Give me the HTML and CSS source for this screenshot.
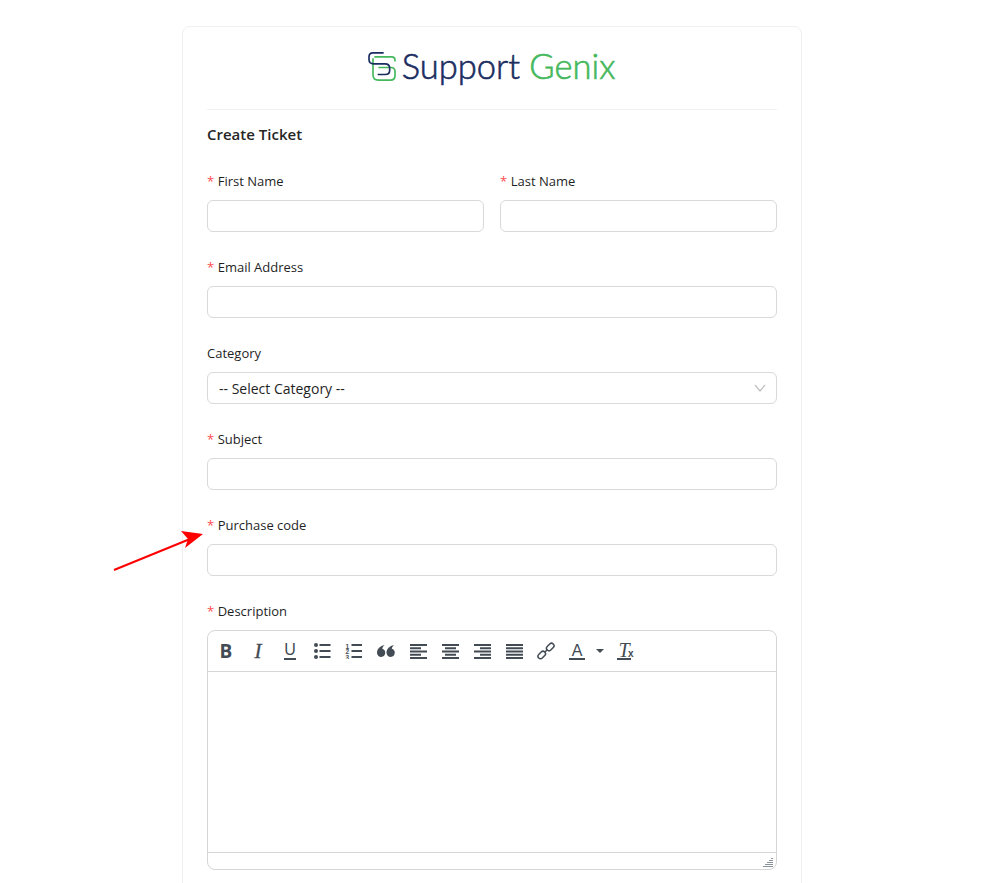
FILE: index.html
```html
<!DOCTYPE html>
<html lang="en">
<head>
    <meta charset="UTF-8">
    <meta name="viewport" content="width=device-width, initial-scale=1.0">
    <title>Create Ticket - Support Genix</title>
    <link rel="stylesheet" href="styles.css">
</head>
<body>

    <div class="card">
        <div class="logo">
            <svg class="logo-mark" viewBox="50 60 90 95" width="30" height="32">
                <path class="mark-green" d="M72 80H124Q134 80 134 90V94M68 84V134Q68 150 84 150H120Q134 150 134 136V124Q134 112 122 112H84"/>
                <path class="mark-navy" d="M100 68H68Q56 68 56 80V88Q56 101 70 101H104Q118 101 118 114V120Q118 133 104 133H82"/>
            </svg>
            <span class="logo-text">Support <span class="logo-green">Genix</span></span>
        </div>

        <h2 class="card-title">Create Ticket</h2>

        <div class="row">
            <div class="field">
                <label class="label"><span class="req">*</span>First Name</label>
                <input class="input" type="text">
            </div>
            <div class="field">
                <label class="label"><span class="req">*</span>Last Name</label>
                <input class="input" type="text">
            </div>
        </div>

        <div class="field">
            <label class="label"><span class="req">*</span>Email Address</label>
            <input class="input" type="text">
        </div>

        <div class="field">
            <label class="label">Category</label>
            <div class="select">
                <span>-- Select Category --</span>
                <svg class="chevron" viewBox="0 0 12 8" width="12" height="8"><path d="M1 1L6 7L11 1"/></svg>
            </div>
        </div>

        <div class="field">
            <label class="label"><span class="req">*</span>Subject</label>
            <input class="input" type="text">
        </div>

        <div class="field">
            <label class="label"><span class="req">*</span>Purchase code</label>
            <input class="input" type="text">
        </div>

        <div class="field">
            <label class="label"><span class="req">*</span>Description</label>
            <div class="editor">
                <div class="toolbar">
                    <button class="tool glyph-b">B</button>
                    <button class="tool glyph-i">I</button>
                    <button class="tool"><span class="glyph-u">U</span></button>
                    <button class="tool">
                        <svg viewBox="0 0 18 16" width="18" height="16">
                            <circle cx="3" cy="2" r="2"/><circle cx="3" cy="8" r="2"/><circle cx="3" cy="14" r="2"/>
                            <rect x="6.500" y="1" width="11" height="2"/><rect x="6.500" y="7" width="11" height="2"/><rect x="6.500" y="13" width="11" height="2"/>
                        </svg>
                    </button>
                    <button class="tool">
                        <svg viewBox="0 0 18 16" width="18" height="16">
                            <text class="mini" x="0.500" y="5.500">1</text><text class="mini" x="0.500" y="11">2</text><text class="mini" x="0.500" y="16.500">3</text>
                            <rect x="6.500" y="1" width="10.500" height="2"/><rect x="6.500" y="7" width="10.500" height="2"/><rect x="6.500" y="13" width="10.500" height="2"/>
                        </svg>
                    </button>
                    <button class="tool">
                        <svg viewBox="0 0 18 12" width="18" height="12">
                            <path d="M4.200 12A4.200 4.200 0 0 1 0 7.800C0 4 3 1 7.500 0C6 1.500 5.500 2.500 5.300 3.800A4.200 4.200 0 0 1 4.200 12Z"/>
                            <path d="M13.700 12A4.200 4.200 0 0 1 9.500 7.800C9.500 4 12.500 1 17 0C15.500 1.500 15 2.500 14.800 3.800A4.200 4.200 0 0 1 13.700 12Z"/>
                        </svg>
                    </button>
                    <button class="tool">
                        <svg viewBox="0 0 17 15" width="17" height="15">
                            <rect width="17" height="2"/><rect y="3.250" width="11" height="2"/><rect y="6.500" width="17" height="2"/><rect y="9.750" width="11" height="2"/><rect y="13" width="17" height="2"/>
                        </svg>
                    </button>
                    <button class="tool">
                        <svg viewBox="0 0 17 15" width="17" height="15">
                            <rect width="17" height="2"/><rect x="3" y="3.250" width="11" height="2"/><rect y="6.500" width="17" height="2"/><rect x="3" y="9.750" width="11" height="2"/><rect y="13" width="17" height="2"/>
                        </svg>
                    </button>
                    <button class="tool">
                        <svg viewBox="0 0 17 15" width="17" height="15">
                            <rect width="17" height="2"/><rect x="6" y="3.250" width="11" height="2"/><rect y="6.500" width="17" height="2"/><rect x="6" y="9.750" width="11" height="2"/><rect y="13" width="17" height="2"/>
                        </svg>
                    </button>
                    <button class="tool">
                        <svg viewBox="0 0 17 15" width="17" height="15">
                            <rect width="17" height="2"/><rect y="3.250" width="17" height="2"/><rect y="6.500" width="17" height="2"/><rect y="9.750" width="17" height="2"/><rect y="13" width="17" height="2"/>
                        </svg>
                    </button>
                    <button class="tool">
                        <svg class="line-icon" viewBox="0 0 18 18" width="18" height="18">
                            <path d="M7.500 10.500L10.500 7.500"/>
                            <rect x="9" y="2.500" width="8.500" height="5" rx="2.500" transform="rotate(-45 13.250 5)"/>
                            <rect x="0.500" y="10.500" width="8.500" height="5" rx="2.500" transform="rotate(-45 4.750 13)"/>
                        </svg>
                    </button>
                    <button class="tool tool-color"><span class="glyph-a">A</span></button>
                    <span class="caret"></span>
                    <button class="tool tool-clear"><span class="glyph-t">T</span><span class="glyph-x">x</span></button>
                </div>
                <div class="editor-body"></div>
                <div class="statusbar">
                    <svg viewBox="0 0 10 9" width="10" height="9">
                        <rect x="8" y="0" width="2" height="1"/>
                        <rect x="6" y="2" width="4" height="1"/>
                        <rect x="4" y="4" width="6" height="1"/>
                        <rect x="2" y="6" width="8" height="1"/>
                        <rect x="0" y="8" width="10" height="1"/>
                    </svg>
                </div>
            </div>
        </div>
    </div>

    <!-- flecha vermelha por cima do formulario -->
    <svg class="arrow" viewBox="0 0 100 50" width="100" height="50">
        <path class="arrow-line" d="M4 46L80 15"/>
        <path class="arrow-head" d="M93 10L71 7L78 15L75 24Z"/>
    </svg>

</body>
</html>
```
FILE: styles.css
```css
html, body {
    margin: 0;
    height: 883px;
    overflow: hidden;
    background: #fff;
}
body {
    position: relative;
    font-family: "Open Sans", "Noto Sans", sans-serif;
    font-size: 14px;
    color: #1f1f1f;
    padding: 26px 12px 0 0;
    box-sizing: border-box;
    display: flex;
    justify-content: center;
}
.card {
    width: 620px;
    height: 960px;
    flex: none;
    box-sizing: border-box;
    padding: 0 24px;
    background: #fff;
    border: 1px solid #f0f0f0;
    border-radius: 8px;
}
.logo {
    height: 83px;
    display: flex;
    align-items: flex-start;
    justify-content: center;
    gap: 5px;
    padding: 19px 2px 0 0;
    box-sizing: border-box;
    border-bottom: 1px solid #f0f0f0;
}
.logo-mark {
    fill: none;
    stroke-width: 5;
    margin-top: 4px;
}
.mark-navy { stroke: #1b2d5f; }
.mark-green { stroke: #45b85c; }
.logo-text {
    font-family: "Lato", sans-serif;
    font-size: 34.500px;
    font-weight: 300;
    line-height: 40px;
    color: #1b2d5f;
    -webkit-text-stroke: 0.600px currentColor;
}
.logo-green { color: #45b85c; }
.card-title {
    margin: 0;
    padding: 12px 0 24px;
    font-size: 15px;
    line-height: 24px;
    font-weight: 600;
    color: #262626;
}
.row {
    display: grid;
    grid-template-columns: 1fr 1fr;
    gap: 16px;
}
.field { margin-bottom: 24px; }
.label {
    display: block;
    font-size: 13px;
    line-height: 22px;
    margin-bottom: 8px;
}
.req {
    color: #ff4d4f;
    margin-right: 3.500px;
}
.input, .select {
    display: block;
    width: 100%;
    height: 32px;
    box-sizing: border-box;
    border: 1px solid #d9d9d9;
    border-radius: 6px;
    background: #fff;
    outline: none;
}
.select {
    display: flex;
    align-items: center;
    justify-content: space-between;
    padding: 0 10px 0 11px;
    font-size: 14px;
}
.chevron {
    fill: none;
    stroke: #bfbfbf;
    stroke-width: 1.200;
}
.editor {
    height: 240px;
    box-sizing: border-box;
    display: flex;
    flex-direction: column;
    border: 1px solid #d6d6d6;
    border-radius: 8px;
}
.toolbar {
    height: 41px;
    flex: none;
    box-sizing: border-box;
    display: flex;
    align-items: center;
    padding: 0 2px;
    border-bottom: 1px solid #d6d6d6;
}
.tool {
    width: 32px;
    height: 32px;
    flex: none;
    padding: 0;
    border: none;
    background: none;
    display: flex;
    align-items: center;
    justify-content: center;
    color: #434b54;
    fill: #434b54;
}
.glyph-b {
    font-family: "Open Sans", sans-serif;
    font-size: 19px;
    font-weight: bold;
}
.glyph-i {
    font-family: "Liberation Serif", serif;
    font-size: 21px;
    font-style: italic;
    -webkit-text-stroke: 0.300px currentColor;
}
.glyph-u {
    font-family: "Liberation Sans", sans-serif;
    font-size: 16px;
    line-height: 14px;
    border-bottom: 2px solid #434b54;
    padding: 0 0 1px;
}
.mini {
    font-family: "Liberation Sans", sans-serif;
    font-size: 6.500px;
    font-weight: bold;
}
.line-icon {
    fill: none;
    stroke: #434b54;
    stroke-width: 1.500;
}
.tool-color { width: 30px; }
.glyph-a {
    font-family: "Liberation Sans", sans-serif;
    font-size: 16px;
    line-height: 15px;
    width: 16px;
    text-align: center;
    border-bottom: 2px solid #434b54;
}
.caret {
    width: 0;
    height: 0;
    margin: 0 4px 0 4px;
    border-left: 4px solid transparent;
    border-right: 4px solid transparent;
    border-top: 4px solid #434b54;
}
.tool-clear { position: relative; }
.glyph-t {
    font-family: "Liberation Serif", serif;
    font-size: 20px;
    line-height: 15px;
    font-style: italic;
    width: 14px;
    text-align: center;
    border-bottom: 2px solid #434b54;
}
.glyph-x {
    position: absolute;
    left: 20px;
    top: 14px;
    font-family: "Liberation Sans", sans-serif;
    font-size: 10px;
    font-weight: bold;
    line-height: 10px;
}
.editor-body { flex: 1; }
.statusbar {
    height: 17px;
    flex: none;
    box-sizing: border-box;
    display: flex;
    align-items: flex-end;
    justify-content: flex-end;
    padding: 0 3px 2px 0;
    border-top: 1px solid #d6d6d6;
    fill: #8a9199;
}
.arrow {
    position: absolute;
    left: 110px;
    top: 524px;
}
.arrow-line {
    fill: none;
    stroke: #f00;
    stroke-width: 2;
}
.arrow-head { fill: #f00; }
```
